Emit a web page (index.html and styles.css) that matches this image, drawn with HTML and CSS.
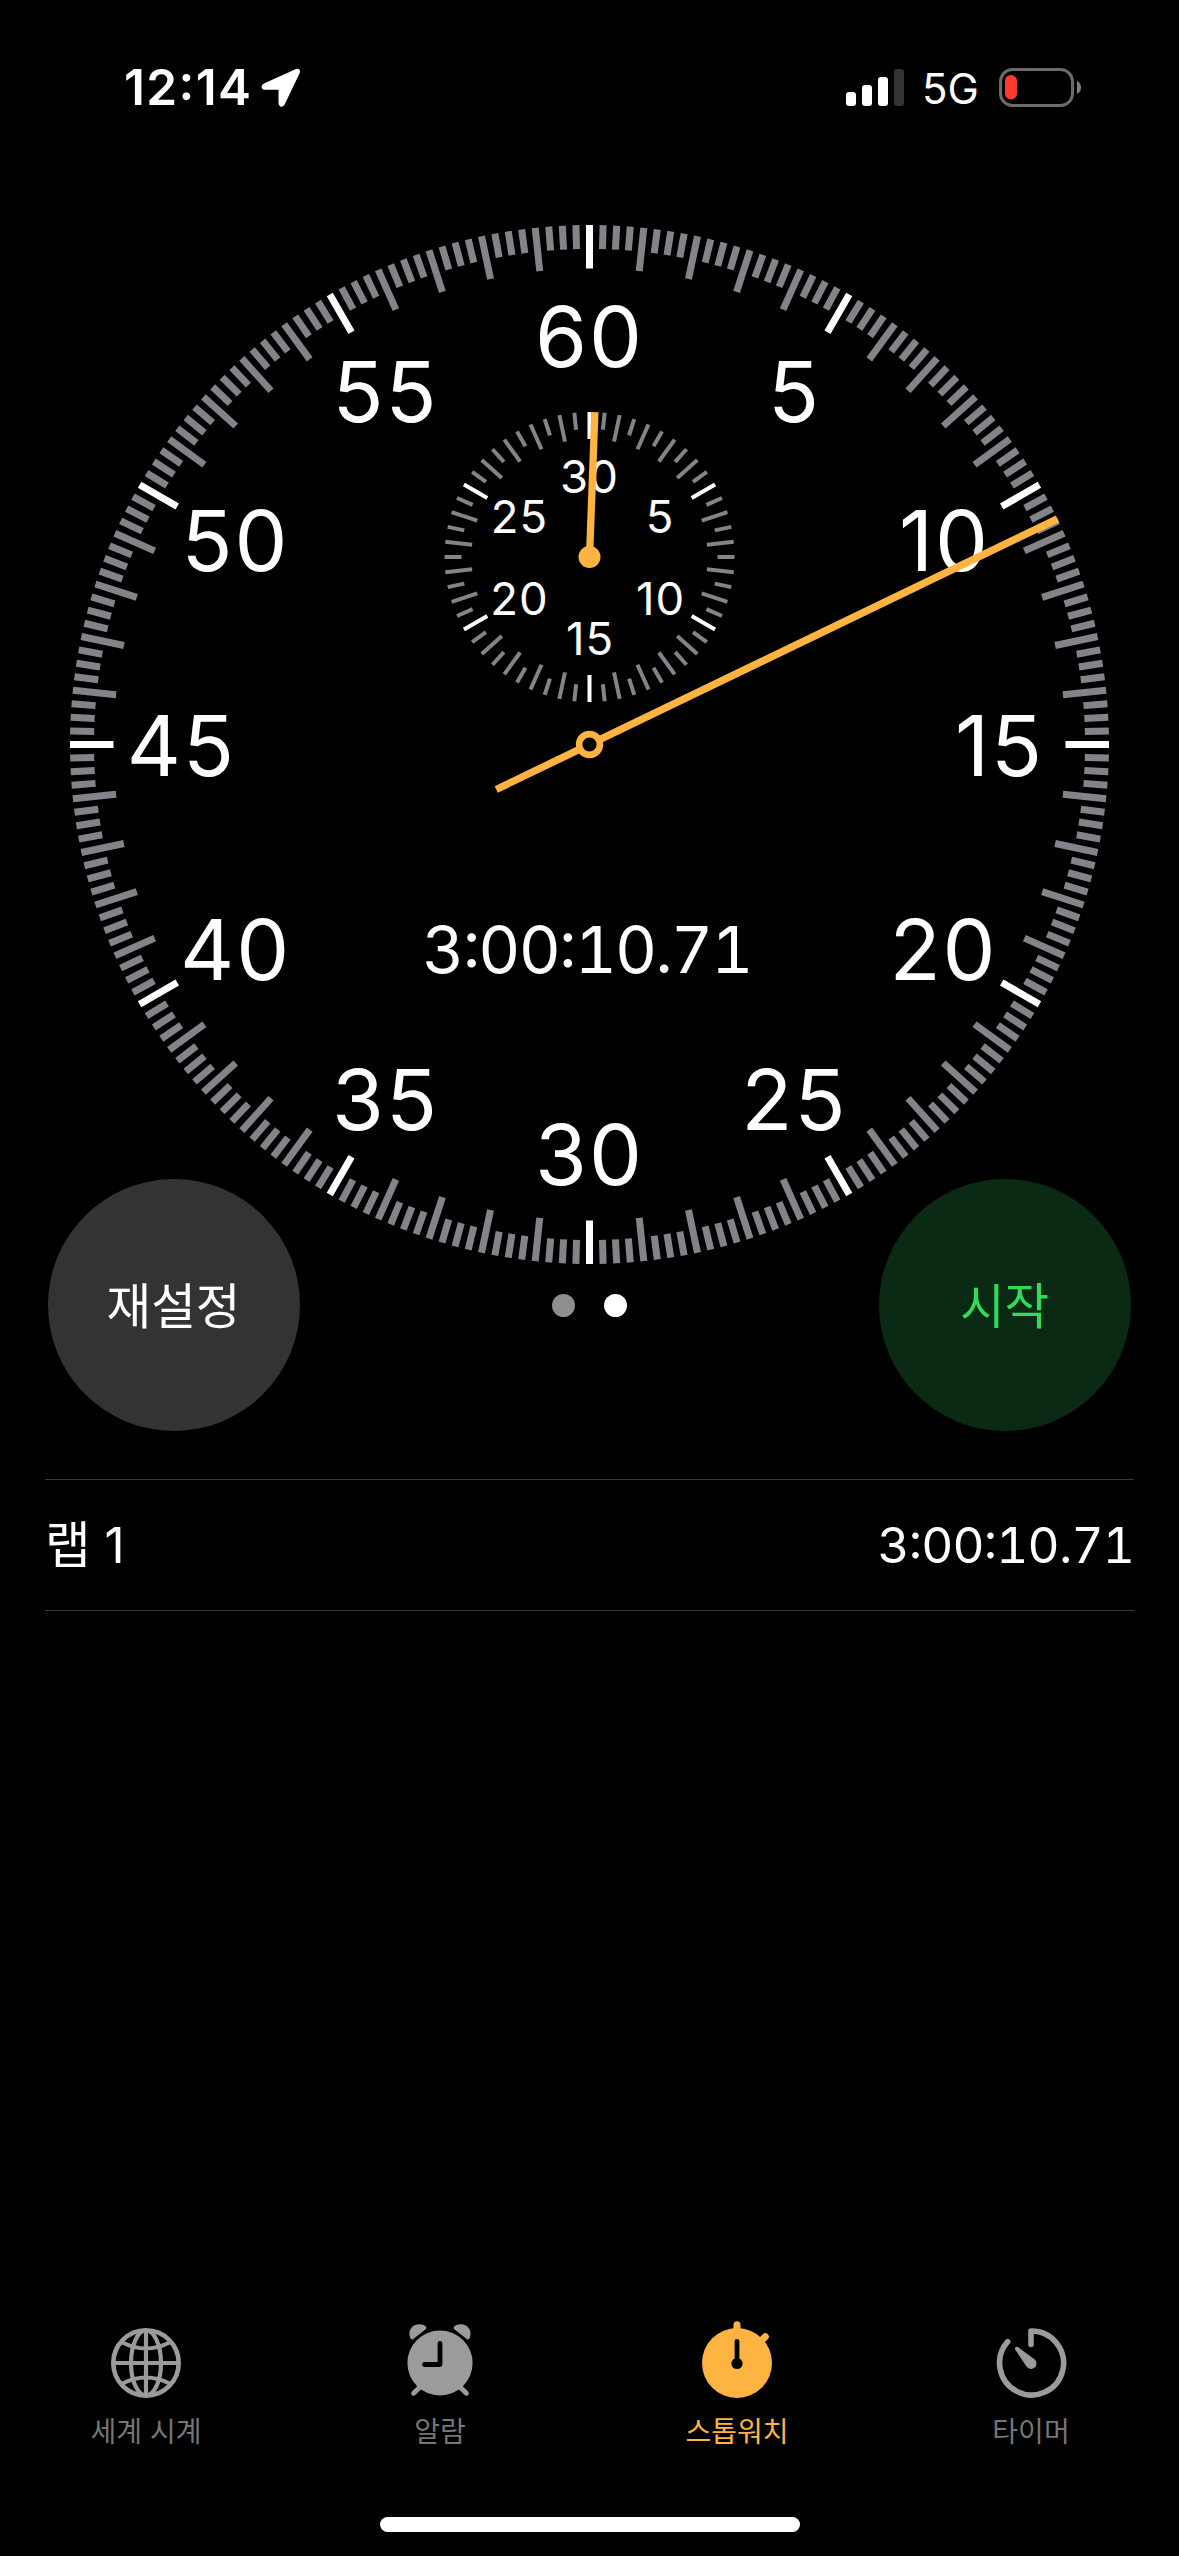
FILE: index.html
```html
<!DOCTYPE html>
<html lang="ko">
<head>
<meta charset="utf-8">
<title>스톱워치</title>
<link rel="stylesheet" href="styles.css">
</head>
<body>
<div class="screen">
  <header class="status">
    <div class="status-left">
      <span class="clock">12:14</span>
      <svg class="location" width="40" height="40" viewBox="0 0 40 40"><path d="M34.500 1.200 L3.500 15.300 C-1 17.500 0 21.800 4.500 21.800 H17.500 V34.500 C17.500 39.500 22 40 23.900 36 L38.600 5.300 C40 2 37.500 -.2 34.500 1.200Z" fill="#fff"/></svg>
    </div>
    <div class="status-right">
      <svg width="58" height="38" viewBox="0 0 58 38" fill="#fff"><rect y="23" width="10" height="14" rx="3"/><rect x="16" y="16" width="10" height="21" rx="3"/><rect x="32" y="8" width="10" height="29" rx="3"/><rect x="48" y="0" width="10" height="37" rx="3" fill="#333"/></svg>
      <span class="network">5G</span>
      <svg class="battery" width="83" height="39" viewBox="0 0 83 39"><rect x="1.500" y="1.500" width="72" height="36" rx="12" fill="none" stroke="#6b6b6b" stroke-width="3"/><path d="M78 13 Q82 15 82 19.500 T78 26Z" fill="#808080"/><rect x="6" y="7" width="12" height="24.500" rx="6" fill="#ff3b30"/></svg>
    </div>
  </header>

  <main class="stopwatch">
    <svg class="dial" width="1039" height="1039" viewBox="-519.5 -519.5 1039 1039">
      <defs>
        <g id="second">
          <path class="tick" d="M0-519.500v24" transform="rotate(1.500)"/>
          <path class="tick" d="M0-519.500v24" transform="rotate(3)"/>
          <path class="tick" d="M0-519.500v24" transform="rotate(4.500)"/>
        </g>
        <g id="sector">
          <path class="tick major" d="M0-519.500v43.500"/>
          <use href="#second"/>
          <g transform="rotate(6)"><path class="tick" d="M0-519.500v43.500"/><use href="#second"/></g>
          <g transform="rotate(12)"><path class="tick" d="M0-519.500v43.500"/><use href="#second"/></g>
          <g transform="rotate(18)"><path class="tick" d="M0-519.500v43.500"/><use href="#second"/></g>
          <g transform="rotate(24)"><path class="tick" d="M0-519.500v43.500"/><use href="#second"/></g>
        </g>
        <g id="minutes">
          <path class="tick major" d="M0-145v27"/>
          <path class="tick" d="M0-145v17" transform="rotate(6)"/>
          <path class="tick" d="M0-145v27" transform="rotate(12)"/>
          <path class="tick" d="M0-145v17" transform="rotate(18)"/>
          <path class="tick" d="M0-145v27" transform="rotate(24)"/>
          <path class="tick" d="M0-145v17" transform="rotate(30)"/>
          <path class="tick" d="M0-145v27" transform="rotate(36)"/>
          <path class="tick" d="M0-145v17" transform="rotate(42)"/>
          <path class="tick" d="M0-145v27" transform="rotate(48)"/>
          <path class="tick" d="M0-145v17" transform="rotate(54)"/>
        </g>
      </defs>
      <g class="seconds-ring">
        <use href="#sector"/>
        <use href="#sector" transform="rotate(30)"/>
        <use href="#sector" transform="rotate(60)"/>
        <use href="#sector" transform="rotate(90)"/>
        <use href="#sector" transform="rotate(120)"/>
        <use href="#sector" transform="rotate(150)"/>
        <use href="#sector" transform="rotate(180)"/>
        <use href="#sector" transform="rotate(210)"/>
        <use href="#sector" transform="rotate(240)"/>
        <use href="#sector" transform="rotate(270)"/>
        <use href="#sector" transform="rotate(300)"/>
        <use href="#sector" transform="rotate(330)"/>
      </g>
      <g class="numerals">
        <text x="0" y="-378">60</text>
        <text x="205" y="-323">5</text>
        <text x="355" y="-173.500">10</text>
        <text x="410" y="31">15</text>
        <text x="354" y="235.500">20</text>
        <text x="205" y="385">25</text>
        <text x="0" y="440">30</text>
        <text x="-204" y="385">35</text>
        <text x="-354" y="235.500">40</text>
        <text x="-408" y="31">45</text>
        <text x="-354" y="-173.500">50</text>
        <text x="-204" y="-323">55</text>
      </g>
      <text class="elapsed" x="-2.500" y="228.500">3:00:10.71</text>
      <g transform="translate(0 -187.500)">
        <g class="minutes-ring">
          <use href="#minutes"/>
          <use href="#minutes" transform="rotate(60)"/>
          <use href="#minutes" transform="rotate(120)"/>
          <use href="#minutes" transform="rotate(180)"/>
          <use href="#minutes" transform="rotate(240)"/>
          <use href="#minutes" transform="rotate(300)"/>
        </g>
        <g class="numerals small">
          <text x="0" y="-64">30</text>
          <text x="70.500" y="-24">5</text>
          <text x="71" y="58">10</text>
          <text x="0.500" y="98">15</text>
          <text x="-70" y="58">20</text>
          <text x="-70" y="-24">25</text>
        </g>
        <path class="hand" d="M0 0V-145" transform="rotate(2.140)"/>
        <circle r="11" fill="#ffb340"/>
      </g>
      <path class="hand" d="M0 103.500V-519.500" transform="rotate(64.260)"/>
      <circle r="10.400" fill="#000" stroke="#ffb340" stroke-width="6.600"/>
    </svg>

    <div class="controls">
      <button class="round reset">재설정</button>
      <div class="pages"><span class="page"></span><span class="page current"></span></div>
      <button class="round start">시작</button>
    </div>

    <ul class="laps">
      <li class="lap"><span class="lap-name">랩 1</span><span class="lap-time">3:00:10.71</span></li>
    </ul>
  </main>

  <nav class="tabs">
    <a class="tab">
      <svg width="84" height="84" viewBox="0 0 84 84" fill="none" stroke="#9b9b9b" stroke-width="4.200"><circle cx="42" cy="42" r="32.700" stroke-width="4.600"/><ellipse cx="42" cy="42" rx="15" ry="32.500"/><path d="M42 9V75M9 42H75M18.500 21.500Q42 33.500 65.500 21.500M18.500 62.500Q42 50.500 65.500 62.500"/></svg>
      <span>세계 시계</span>
    </a>
    <a class="tab">
      <svg width="84" height="84" viewBox="0 0 84 84" fill="#9b9b9b"><circle cx="42" cy="42" r="32.600"/><path d="M15.600 17.700C14.500 18.800 12.900 18.600 12.300 17C9.200 9.500 14.500 3.300 21.500 3.300C24 3.300 26.400 4 27.800 5.500C28.800 6.700 28.400 7.700 27.400 8.500ZM68.400 17.700C69.500 18.800 71.100 18.600 71.700 17C74.800 9.500 69.500 3.300 62.500 3.300C60 3.300 57.600 4 56.200 5.500C55.200 6.700 55.600 7.700 56.600 8.500Z"/><path d="M22 66L15.600 72.200M62 66L68.400 72.200" stroke="#9b9b9b" stroke-width="5" stroke-linecap="round"/><path d="M42 22.500V43.500H26.500" fill="none" stroke="#000" stroke-width="4.800" stroke-linecap="round" stroke-linejoin="round"/></svg>
      <span>알람</span>
    </a>
    <a class="tab active">
      <svg width="84" height="84" viewBox="0 0 84 84" fill="#ffb340"><circle cx="42" cy="42" r="35"/><path d="M42 3.700V12M70.300 15.700L62 24" stroke="#ffb340" stroke-width="7" stroke-linecap="round"/><path d="M42 20.300V42" stroke="#000" stroke-width="4.800" stroke-linecap="round"/><circle cx="42" cy="42.500" r="5.600" fill="#000"/></svg>
      <span>스톱워치</span>
    </a>
    <a class="tab">
      <svg width="84" height="84" viewBox="0 0 84 84" fill="#9b9b9b"><path d="M42 23.500V10A32 32 0 1 1 18.700 20.700" fill="none" stroke="#9b9b9b" stroke-width="5.600" stroke-linecap="round" stroke-linejoin="round"/><path d="M26.500 26.200C27.300 25.400 28.200 25.600 29.200 26.300L45.500 38.200A5.500 5.500 0 1 1 37.500 45.600L26.500 29C25.900 28 25.700 27 26.500 26.200Z"/></svg>
      <span>타이머</span>
    </a>
  </nav>
  <div class="home-indicator"></div>
</div>
</body>
</html>
```
FILE: styles.css
```css
* { box-sizing: border-box; }

body {
  margin: 0;
  background: #000;
  color: #fff;
  font-family: Inter, "Noto Sans CJK KR", sans-serif;
}

.screen {
  display: flex;
  flex-direction: column;
  width: 1179px;
  height: 2556px;
  overflow: hidden;
}

.status {
  display: flex;
  justify-content: space-between;
  height: 225px;
  padding: 68px 97px 0 124px;
  line-height: 39px;
}

.status-left,
.status-right {
  display: flex;
  align-items: center;
  height: 39px;
}

.clock {
  width: 137px;
  font-size: 49.5px;
  font-weight: 600;
  font-feature-settings: "case";
  letter-spacing: 1.4px;
}

.network {
  width: 95px;
  padding: 1px 0 0 18px;
  font-size: 42px;
}

.stopwatch {
  display: flex;
  flex-direction: column;
}

.dial {
  display: block;
  align-self: center;
}

.tick {
  stroke: #84838a;
}

.tick.major {
  stroke: #fff;
}

.seconds-ring {
  stroke-width: 7px;
}

.minutes-ring {
  stroke-width: 4px;
}

.hand {
  stroke: #ffb340;
  stroke-width: 7.3px;
}

.numerals {
  fill: #fff;
  font-size: 84px;
  letter-spacing: 2px;
  text-anchor: middle;
}

.numerals.small {
  font-size: 45.5px;
  letter-spacing: 1px;
}

.elapsed {
  fill: #fff;
  font-size: 65px;
  font-feature-settings: "case", "tnum";
  letter-spacing: -1.8px;
  text-anchor: middle;
}

.controls {
  display: flex;
  justify-content: space-between;
  align-items: center;
  margin-top: -85px;
  padding: 0 48px;
}

.round {
  width: 252px;
  height: 252px;
  padding: 0 1px 5px 0;
  border: 0;
  border-radius: 50%;
  font-family: inherit;
  font-size: 48.5px;
}

.reset {
  background: #333;
  color: #fff;
}

.start {
  background: #0a2a13;
  color: #30db5b;
}

.pages {
  display: flex;
  gap: 29px;
}

.page {
  width: 23px;
  height: 23px;
  border-radius: 50%;
  background: #8e8e8e;
}

.page.current {
  background: #fff;
}

.laps {
  margin: 48px 45px 0;
  padding: 0;
  border-top: 1px solid #38383a;
  list-style: none;
}

.lap {
  display: flex;
  justify-content: space-between;
  align-items: baseline;
  height: 131px;
  border-bottom: 1px solid #38383a;
  font-size: 49.5px;
  line-height: 130px;
}

.lap-time {
  font-feature-settings: "case", "tnum";
  letter-spacing: -0.8px;
}

.tabs {
  display: grid;
  grid-template-columns: 292px 296px 298px 290px;
  margin-top: auto;
}

.tab {
  display: flex;
  flex-direction: column;
  align-items: center;
  color: #757575;
  font-size: 28px;
  line-height: 40px;
}

.tab.active {
  color: #ffb340;
}

.tab span {
  margin-top: 7px;
}

.home-indicator {
  align-self: center;
  width: 420px;
  height: 15px;
  margin: 65px 0 24px;
  border-radius: 8px;
  background: #fff;
}
```
